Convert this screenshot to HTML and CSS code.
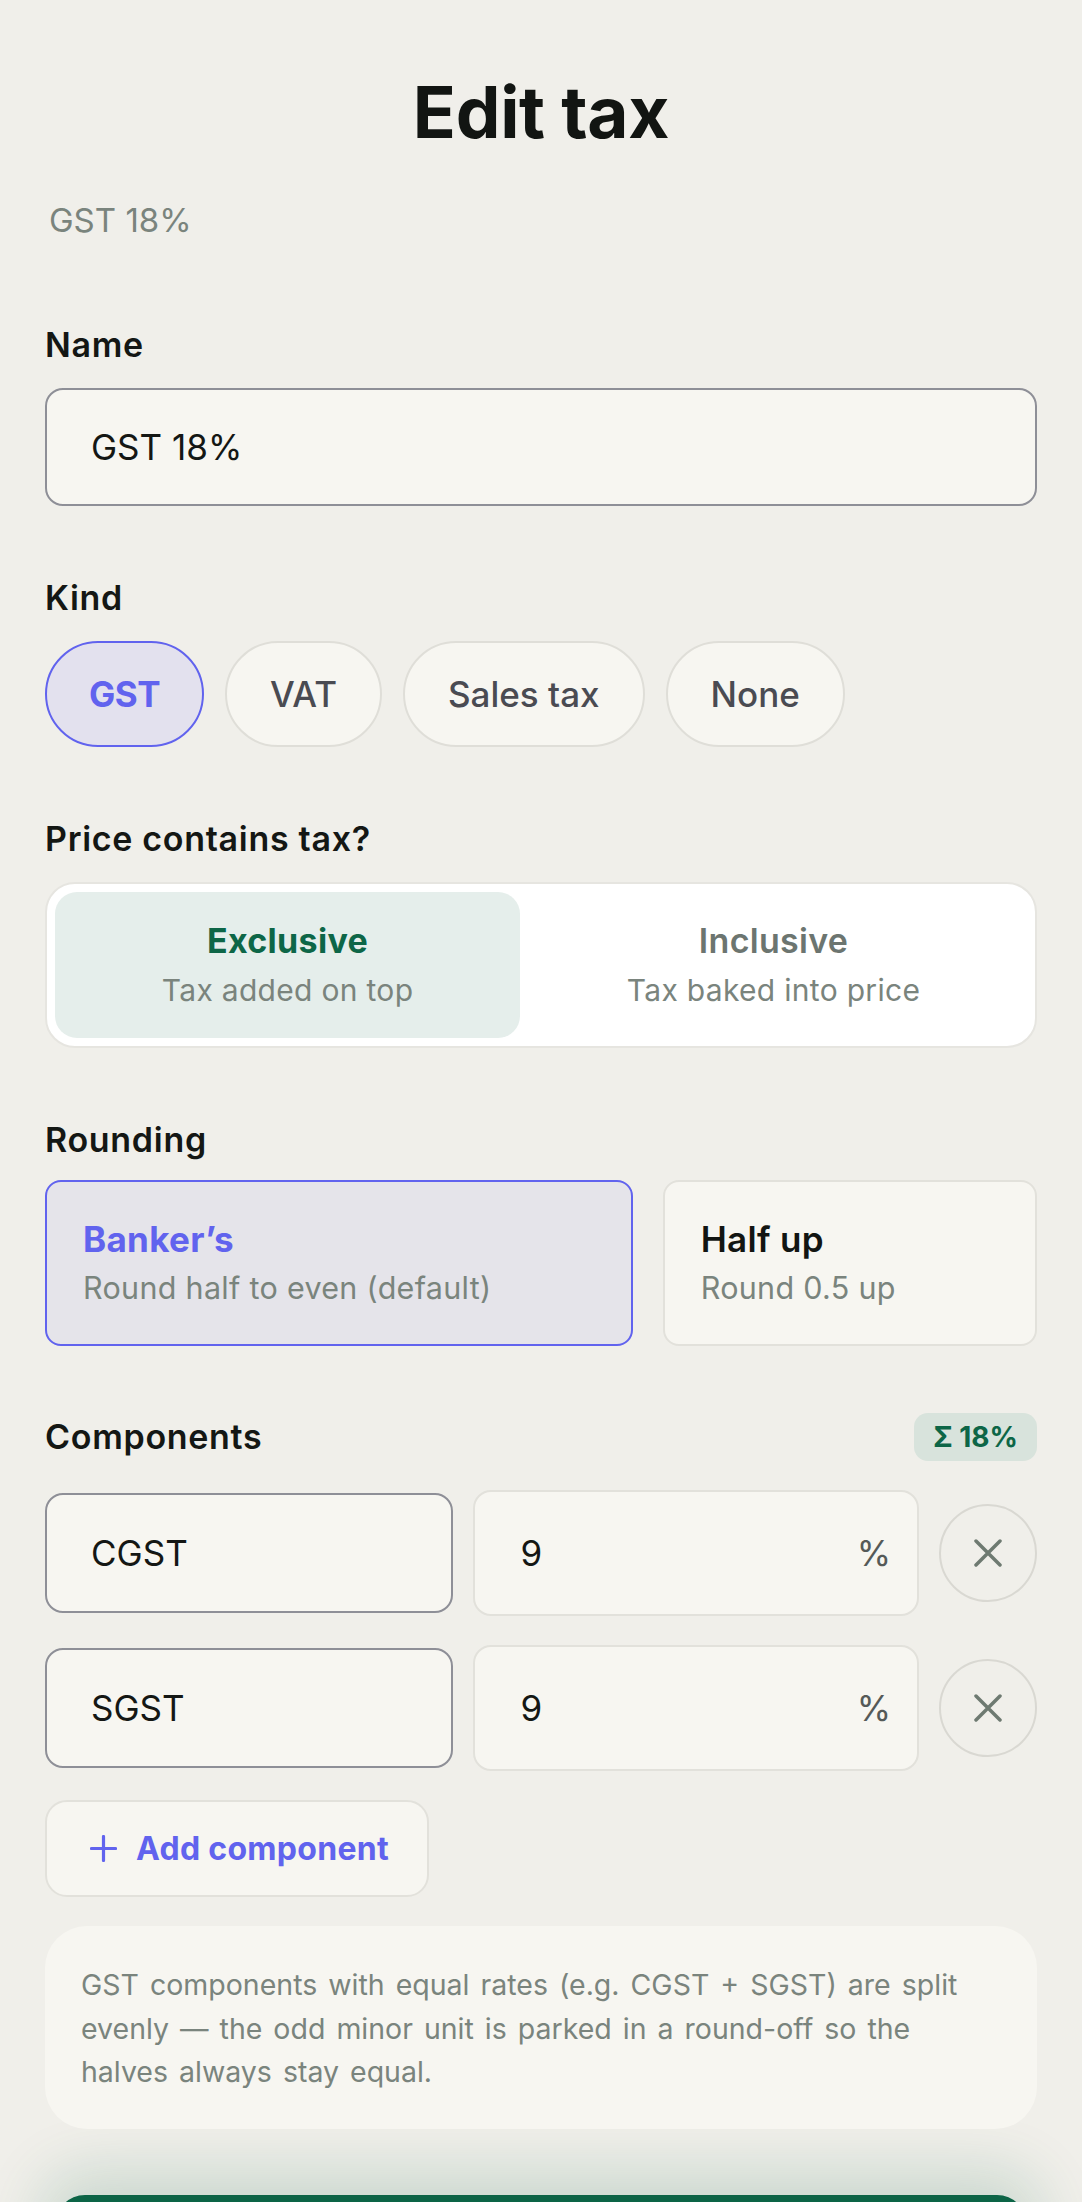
FILE: index.html
```html
<!DOCTYPE html>
<html lang="en">
<head>
<meta charset="utf-8">
<title>Edit tax</title>
<link rel="stylesheet" href="styles.css">
</head>
<body>
<main class="page">
  <h1 class="title">Edit tax</h1>
  <p class="subtitle">GST 18%</p>

  <section class="field field-first">
    <div class="label">Name</div>
    <div class="input input-name">GST 18%</div>
  </section>

  <section class="field">
    <div class="label">Kind</div>
    <div class="chips">
      <button class="chip chip-active">GST</button>
      <button class="chip">VAT</button>
      <button class="chip">Sales tax</button>
      <button class="chip">None</button>
    </div>
  </section>

  <section class="field">
    <div class="label">Price contains tax?</div>
    <div class="segmented">
      <div class="seg-option seg-active">
        <div class="seg-title">Exclusive</div>
        <div class="seg-sub">Tax added on top</div>
      </div>
      <div class="seg-option">
        <div class="seg-title">Inclusive</div>
        <div class="seg-sub">Tax baked into price</div>
      </div>
    </div>
  </section>

  <section class="field">
    <div class="label label-tight">Rounding</div>
    <div class="cards">
      <div class="card card-active">
        <div class="card-title">Banker’s</div>
        <div class="card-sub">Round half to even (default)</div>
      </div>
      <div class="card">
        <div class="card-title">Half up</div>
        <div class="card-sub">Round 0.5 up</div>
      </div>
    </div>
  </section>

  <section class="components">
    <div class="comp-header">
      <div class="label label-flat">Components</div>
      <div class="badge">Σ 18%</div>
    </div>

    <div class="comp-row">
      <div class="input comp-name">CGST</div>
      <div class="rate"><span class="rate-value">9</span><span class="rate-unit">%</span></div>
      <button class="remove" aria-label="Remove">
        <svg viewBox="0 0 28 28" width="28" height="28"><path d="M2 2L26 26M26 2L2 26" /></svg>
      </button>
    </div>

    <div class="comp-row">
      <div class="input comp-name">SGST</div>
      <div class="rate"><span class="rate-value">9</span><span class="rate-unit">%</span></div>
      <button class="remove" aria-label="Remove">
        <svg viewBox="0 0 28 28" width="28" height="28"><path d="M2 2L26 26M26 2L2 26" /></svg>
      </button>
    </div>

    <div class="add-wrap">
      <button class="add">
        <svg viewBox="0 0 27 27" width="27" height="27"><path d="M13.5 1.5V25.5M1.5 13.5H25.5" /></svg>
        <span>Add component</span>
      </button>
    </div>

    <div class="note">GST components with equal rates (e.g. CGST + SGST) are split evenly — the odd minor unit is parked in a round-off so the halves always stay equal.</div>
  </section>

  <footer class="footer">
    <button class="save" aria-label="Save"></button>
  </footer>
</main>
</body>
</html>
```

FILE: styles.css
```css
* {
  box-sizing: border-box;
}

html, body {
  margin: 0;
  padding: 0;
  background: #f0efea;
}

body {
  font-family: Inter, "Noto Sans", "Liberation Sans", sans-serif;
  color: #121512;
}

button {
  font-family: inherit;
  cursor: pointer;
}

.page {
  padding: 70px 45px 0;
}

.title {
  margin: 0;
  text-align: center;
  font-size: 71px;
  line-height: 84px;
  font-weight: 700;
  letter-spacing: -0.3px;
  color: #121512;
}

.subtitle {
  margin: 46px 0 0;
  padding-left: 4px;
  font-size: 33px;
  line-height: 40px;
  color: #7a847d;
}

.field {
  margin-top: 72px;
}

.field-first {
  margin-top: 85px;
}

.label {
  font-size: 34px;
  line-height: 40px;
  font-weight: 600;
  letter-spacing: 0.7px;
  color: #141714;
  margin-bottom: 23px;
}

.label-tight {
  margin-bottom: 20px;
}

.label-flat {
  margin-bottom: 0;
}

.input {
  height: 118px;
  display: flex;
  align-items: center;
  padding: 0 44px;
  background: #f7f6f1;
  border: 2.5px solid #8e8f97;
  border-radius: 18px;
  font-size: 35px;
  color: #141714;
}

/* Kind chips */
.chips {
  display: flex;
  gap: 21px;
}

.chip {
  height: 106px;
  padding: 0 43px;
  border-radius: 53px;
  border: 2px solid #dfded8;
  background: #f7f6f1;
  font-size: 35px;
  font-weight: 500;
  color: #4a4b52;
}

.chip-active {
  padding: 0 42px;
  border-color: #6163ee;
  background: #e3e1ee;
  color: #6163ee;
  font-weight: 700;
  letter-spacing: -0.5px;
}

/* Segmented */
.segmented {
  display: flex;
  padding: 8px;
  background: #ffffff;
  border: 2px solid #e6e5e0;
  border-radius: 30px;
}

.seg-option {
  flex: 1 1 auto;
  padding: 29px 24px;
  border-radius: 22px;
  text-align: center;
}

.seg-active {
  background: #e5eeeb;
}

.seg-title {
  font-size: 34px;
  line-height: 40px;
  font-weight: 600;
  letter-spacing: 0.3px;
  color: #6c7570;
  margin-bottom: 10px;
}

.seg-active .seg-title {
  color: #0d6647;
  font-weight: 700;
}

.seg-sub {
  font-size: 30px;
  line-height: 38px;
  letter-spacing: 0.3px;
  color: #7a847d;
}

/* Rounding cards */
.cards {
  display: flex;
  gap: 30px;
}

.card {
  flex: 1 1 auto;
  padding: 37px 36px;
  background: #f7f6f1;
  border: 2px solid #e2e1db;
  border-radius: 16px;
}

.card-active {
  background: #e5e4ea;
  border-color: #6163ee;
}

.card-title {
  font-size: 35px;
  line-height: 40px;
  font-weight: 600;
  letter-spacing: 0.3px;
  color: #121512;
  margin-bottom: 10px;
}

.card-active .card-title {
  color: #6163ee;
  font-weight: 700;
}

.card-sub {
  font-size: 30.5px;
  line-height: 38px;
  letter-spacing: 0.3px;
  color: #7a847d;
}

/* Components */
.components {
  margin-top: 67px;
  display: flex;
  flex-direction: column;
  gap: 29px;
}

.comp-header {
  display: flex;
  align-items: center;
  justify-content: space-between;
}

.badge {
  height: 48px;
  line-height: 48px;
  padding: 0 19px;
  border-radius: 14px;
  background: #d8e3dc;
  color: #0d6647;
  font-size: 28px;
  font-weight: 700;
}

.comp-row {
  display: grid;
  grid-template-columns: 11fr 12fr 98px;
  gap: 20px;
  align-items: center;
}

.comp-name {
  height: 120px;
}

.rate {
  height: 126px;
  display: flex;
  align-items: center;
  justify-content: space-between;
  padding: 0 26px 0 45px;
  background: #f7f6f1;
  border: 2px solid #e2e1db;
  border-radius: 18px;
  font-size: 35px;
}

.rate-value {
  color: #141714;
}

.rate-unit {
  color: #555a58;
}

.remove {
  width: 98px;
  height: 98px;
  border-radius: 50%;
  border: 2px solid #d9d8d2;
  background: transparent;
  display: flex;
  align-items: center;
  justify-content: center;
  padding: 0;
}

.remove svg path {
  stroke: #6e7a71;
  stroke-width: 3.5;
  stroke-linecap: round;
  fill: none;
}

.add-wrap {
  display: flex;
}

.add {
  height: 97px;
  display: flex;
  align-items: center;
  gap: 19px;
  padding: 0 38px 0 43px;
  background: #f7f6f1;
  border: 2px solid #e2e1db;
  border-radius: 22px;
  font-size: 32px;
  font-weight: 700;
  letter-spacing: 0.3px;
  color: #6163ee;
}

.add svg path {
  stroke: #6163ee;
  stroke-width: 3.2;
  stroke-linecap: round;
  fill: none;
}

.note {
  padding: 37px 36px 35px;
  background: #f7f6f1;
  border-radius: 42px;
  font-size: 28.5px;
  line-height: 43.5px;
  word-spacing: 3px;
  color: #7a847d;
}

/* Footer */
.footer {
  margin-top: 66px;
  padding: 0 10px 40px;
}

.save {
  display: block;
  width: 100%;
  height: 112px;
  border: none;
  border-radius: 30px;
  background: #0c6446;
  box-shadow: 0 -10px 60px 14px rgba(12, 100, 70, 0.16);
}
```
